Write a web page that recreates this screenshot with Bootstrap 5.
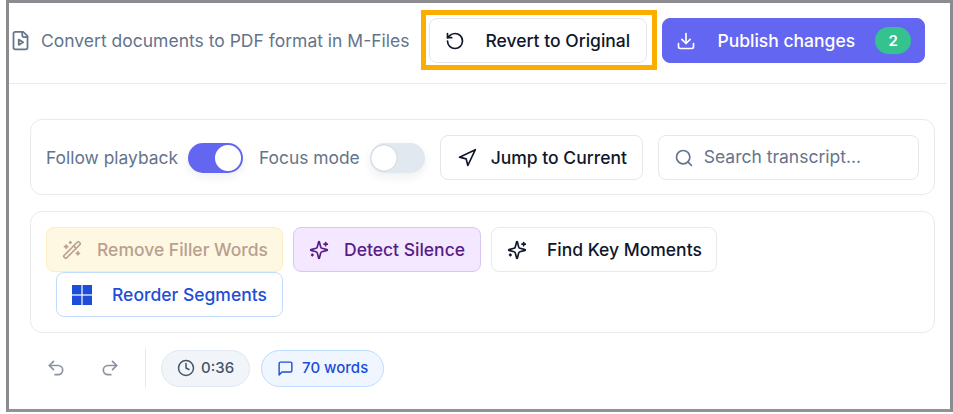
<!DOCTYPE html>
<html lang="en">
<head>
  <meta charset="UTF-8">
  <meta name="viewport" content="width=device-width, initial-scale=1.0">
  <title>Transcript editor</title>
  <link href="https://cdn.jsdelivr.net/npm/bootstrap@5.3.2/dist/css/bootstrap.min.css" rel="stylesheet">
  <style>
    html, body { height: 100%; overflow: hidden; }
    body { background: #fff; font-family: "Inter", "Liberation Sans", sans-serif; font-size: 17.5px; color: #0f172a; }
    svg { flex: none; fill: none; stroke: currentColor; stroke-width: 2; stroke-linecap: round; stroke-linejoin: round; }
    .frame-box { width: 947px; height: 412px; margin-left: 6px; border: 3px solid #8b8b90; border-bottom-color: #929296; }
    .top-bar { height: 81px; padding: 15px 25px 0 1px; margin-right: 3px; border-bottom: 1px solid #e8eaee; }
    .doc-icon { color: #64748b; margin: 12px 10px 0 0; }
    .doc-title { color: #64748b; font-size: 17.5px; line-height: 45px; white-space: nowrap; }
    .act-btn { height: 45px; padding: 0 15px; border-radius: 8px; font-size: 17.5px; font-weight: 450; line-height: 1; white-space: nowrap; background: #fff; border: 1px solid #e5e7eb; color: #0f172a; }
    .act-btn:disabled { opacity: 1; }
    .revert-wrap { position: relative; margin: 0 15px 0 20px; }
    .revert-wrap::after { content: ""; position: absolute; left: -8px; right: -10px; top: -8px; bottom: -7px; border: 5px solid #fdad00; pointer-events: none; }
    .revert-btn { width: 218px; padding-left: 15px; gap: 20px; }
    .publish-btn { width: 263px; padding-left: 13px; gap: 21px; background: #6366f1; border-color: #6366f1; color: #fff; }
    .publish-btn:hover { background: #5558e6; color: #fff; }
    .count-pill { flex: none; width: 36px; height: 27px; margin-left: -1px; border-radius: 14px; background: #34c38f; font-size: 15px; font-weight: 600; }
    .panel { margin: 0 15px 16px 21px; border: 1px solid #e8eaee; border-radius: 12px; padding: 15px; }
    .panel-top { margin-top: 35px; height: 76px; }
    .panel-tools { height: 122px; }
    .sw-label { color: #64748b; font-size: 17.4px; white-space: nowrap; margin: 2px 10px 0 0; }
    .sw-label-next { margin-left: 16px; }
    .form-switch .form-check-input.sw { flex: none; width: 55px; height: 30px; margin: 1px 0 0; border: 0; border-radius: 15px; background-size: 100% 100%; background-position: 0 0; box-shadow: 0 4px 10px rgba(15, 23, 42, .07); }
    .form-switch .form-check-input.sw:checked { background-color: #6366f1; background-image: radial-gradient(circle at 40px 15px, #fff 12.5px, transparent 13.5px); }
    .form-switch .form-check-input.sw:not(:checked) { background-color: #e2e8f0; background-image: radial-gradient(circle at 14px 15px, #fff 12px, #d3d8df 13px, transparent 14px); }
    .jump-btn { flex: none; width: 203px; padding-left: 16px; padding-top: 1px; gap: 14px; margin-left: 15px; }
    .search-box { flex: none; width: 261px; height: 45px; margin-left: 15px; padding: 1px 15px 0; gap: 10px; border: 1px solid #e5e7eb; border-radius: 8px; color: #64748b; }
    .search-box input { border: 0; outline: 0; min-width: 0; width: 100%; padding: 0; font-size: 17.5px; color: #0f172a; background: transparent; }
    .search-box input::placeholder { color: #64748b; opacity: 1; }
    .tool-btn { margin-left: 10px; }
    .tool-btn:first-child { margin-left: 0; }
    .tool-filler { width: 237px; gap: 15px; background: #fef8e3; border-color: #fbeec4; color: #b9a08f; }
    .tool-silence { width: 188px; gap: 15px; background: #f3e8ff; border-color: #d9c6f2; color: #581c87; }
    .tool-moments { width: 226px; gap: 20px; border-color: #e8eaee; }
    .tool-reorder { width: 227px; gap: 20px; border-color: #bfdbfe; color: #1d4ed8; }
    .tool-reorder rect { fill: #1d4ed8; stroke: none; }
    .foot-row { margin: 16px 0 0 37px; height: 38px; }
    .hist-btn { color: #8a929e; }
    .hist-next { margin-left: 34px; }
    .foot-rule { width: 1px; height: 40px; margin: 0 15px 0 25px; background: #e8eaee; }
    .stat-pill { height: 37px; padding: 0 15px; border-radius: 19px; font-size: 15px; font-weight: 450; border: 1px solid; white-space: nowrap; }
    .stat-time { gap: 6px; background: #f1f5f9; border-color: #e2e8f0; color: #475569; }
    .stat-words { gap: 8px; margin-left: 11px; background: #eff6ff; border-color: #bfdbfe; color: #1d4ed8; }
  </style>
</head>
<body>
  <div class="frame-box">
    <div class="top-bar d-flex align-items-start">
      <svg class="doc-icon" width="21" height="21" viewBox="0 0 24 24"><path d="M15 2H6a2 2 0 0 0-2 2v16a2 2 0 0 0 2 2h12a2 2 0 0 0 2-2V7Z"/><path d="M14 2v4a2 2 0 0 0 2 2h4"/><path d="m10 11 5 3-5 3v-6z"/></svg>
      <span class="doc-title">Convert documents to PDF format in M-Files</span>
      <div class="revert-wrap">
        <button class="btn act-btn revert-btn d-flex align-items-center" type="button">
          <svg width="20" height="20" viewBox="0 0 24 24"><path d="M3 12a9 9 0 1 0 9-9 9.75 9.75 0 0 0-6.74 2.74L3 8"/><path d="M3 3v5h5"/></svg>
          Revert to Original
        </button>
      </div>
      <button class="btn act-btn publish-btn d-flex align-items-center" type="button">
        <svg width="20" height="20" viewBox="0 0 24 24"><path d="M21 15v4a2 2 0 0 1-2 2H5a2 2 0 0 1-2-2v-4"/><polyline points="7 10 12 15 17 10"/><line x1="12" y1="15" x2="12" y2="3"/></svg>
        Publish changes
        <span class="count-pill d-flex align-items-center justify-content-center">2</span>
      </button>
    </div>

    <div class="panel panel-top d-flex align-items-center">
      <label class="sw-label" for="followSw">Follow playback</label>
      <div class="form-check form-switch p-0 m-0 d-flex"><input class="form-check-input sw" type="checkbox" role="switch" id="followSw" checked></div>
      <label class="sw-label sw-label-next" for="focusSw">Focus mode</label>
      <div class="form-check form-switch p-0 m-0 d-flex"><input class="form-check-input sw" type="checkbox" role="switch" id="focusSw"></div>
      <button class="btn act-btn jump-btn d-flex align-items-center" type="button">
        <svg width="20" height="20" viewBox="0 0 24 24"><polygon points="3 11 22 2 13 21 11 13 3 11"/></svg>
        Jump to Current
      </button>
      <div class="search-box d-flex align-items-center">
        <svg width="20" height="20" viewBox="0 0 24 24"><circle cx="11" cy="11" r="8"/><path d="m21 21-4.3-4.3"/></svg>
        <input type="text" placeholder="Search transcript...">
      </div>
    </div>

    <div class="panel panel-tools d-flex flex-wrap align-content-start">
      <button class="btn act-btn tool-btn tool-filler d-flex align-items-center" type="button">
        <svg width="20" height="20" viewBox="0 0 24 24"><path d="m21.64 3.64-1.28-1.28a1.21 1.21 0 0 0-1.72 0L2.36 18.64a1.21 1.21 0 0 0 0 1.72l1.28 1.28a1.2 1.2 0 0 0 1.72 0L21.64 5.36a1.2 1.2 0 0 0 0-1.72"/><path d="m14 7 3 3"/><path d="M5 6v4"/><path d="M19 14v4"/><path d="M10 2v2"/><path d="M7 8H3"/><path d="M21 16h-4"/><path d="M11 3H9"/></svg>
        Remove Filler Words
      </button>
      <button class="btn act-btn tool-btn tool-silence d-flex align-items-center" type="button">
        <svg width="20" height="20" viewBox="0 0 24 24"><path d="M9.937 15.5A2 2 0 0 0 8.5 14.063l-6.135-1.582a.5.5 0 0 1 0-.962L8.5 9.936A2 2 0 0 0 9.937 8.5l1.582-6.135a.5.5 0 0 1 .963 0L14.063 8.5A2 2 0 0 0 15.5 9.937l6.135 1.581a.5.5 0 0 1 0 .964L15.5 14.063a2 2 0 0 0-1.437 1.437l-1.582 6.135a.5.5 0 0 1-.963 0z"/><path d="M20 3v4"/><path d="M22 5h-4"/><path d="M4 17v2"/><path d="M5 18H3"/></svg>
        Detect Silence
      </button>
      <button class="btn act-btn tool-btn tool-moments d-flex align-items-center" type="button">
        <svg width="20" height="20" viewBox="0 0 24 24"><path d="M9.937 15.5A2 2 0 0 0 8.5 14.063l-6.135-1.582a.5.5 0 0 1 0-.962L8.5 9.936A2 2 0 0 0 9.937 8.5l1.582-6.135a.5.5 0 0 1 .963 0L14.063 8.5A2 2 0 0 0 15.5 9.937l6.135 1.581a.5.5 0 0 1 0 .964L15.5 14.063a2 2 0 0 0-1.437 1.437l-1.582 6.135a.5.5 0 0 1-.963 0z"/><path d="M20 3v4"/><path d="M22 5h-4"/><path d="M4 17v2"/><path d="M5 18H3"/></svg>
        Find Key Moments
      </button>
      <button class="btn act-btn tool-btn tool-reorder d-flex align-items-center" type="button">
        <svg width="20" height="20" viewBox="0 0 20 20"><rect x="0" y="0" width="9.4" height="9.4"/><rect x="10.6" y="0" width="9.4" height="9.4"/><rect x="0" y="10.6" width="9.4" height="9.4"/><rect x="10.6" y="10.6" width="9.4" height="9.4"/></svg>
        Reorder Segments
      </button>
    </div>

    <div class="foot-row d-flex align-items-center">
      <span class="hist-btn d-flex"><svg width="20" height="20" viewBox="0 0 24 24"><path d="M9 14 4 9l5-5"/><path d="M4 9h10.5a5.5 5.5 0 0 1 5.5 5.5a5.5 5.5 0 0 1-5.5 5.5H11"/></svg></span>
      <span class="hist-btn hist-next d-flex"><svg width="20" height="20" viewBox="0 0 24 24"><path d="m15 14 5-5-5-5"/><path d="M20 9H9.5A5.5 5.5 0 0 0 4 14.5A5.5 5.5 0 0 0 9.5 20H13"/></svg></span>
      <div class="foot-rule"></div>
      <span class="stat-pill stat-time d-flex align-items-center">
        <svg width="18" height="18" viewBox="0 0 24 24"><circle cx="12" cy="12" r="10"/><polyline points="12 6 12 12 16 14"/></svg>
        0:36
      </span>
      <span class="stat-pill stat-words d-flex align-items-center">
        <svg width="17" height="17" viewBox="0 0 24 24"><path d="M21 15a2 2 0 0 1-2 2H7l-4 4V5a2 2 0 0 1 2-2h14a2 2 0 0 1 2 2z"/></svg>
        70 words
      </span>
    </div>
  </div>
  <script src="https://cdn.jsdelivr.net/npm/bootstrap@5.3.2/dist/js/bootstrap.bundle.min.js"></script>
</body>
</html>
